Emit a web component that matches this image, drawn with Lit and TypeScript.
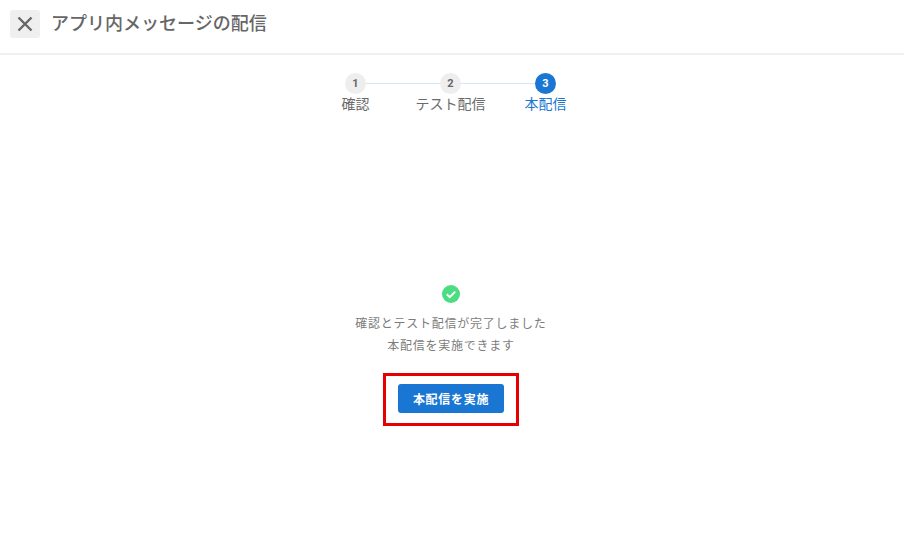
import { LitElement, html, css } from "lit";
import { customElement } from "lit/decorators.js";

@customElement("app-root")
export class AppRoot extends LitElement {
  static styles = css`
    :host {
      display: block;
      width: 904px;
      height: 535px;
      background: #fff;
      font-family: Roboto, "Noto Sans CJK JP", sans-serif;
      color: #666;
      overflow: hidden;
    }
    .header {
      height: 55px;
      box-sizing: border-box;
      border-bottom: 2px solid #f0f0f0;
      display: flex;
      align-items: flex-start;
      gap: 11px;
      padding: 10px 0 0 10px;
    }
    .close {
      width: 30px;
      height: 28px;
      border-radius: 3px;
      background: #efefef;
      display: flex;
      align-items: center;
      justify-content: center;
    }
    .title {
      font-size: 18px;
      font-weight: 500;
      color: #666;
      line-height: 28px;
    }
    .main {
      padding-right: 2px;
    }
    .steps {
      display: flex;
      justify-content: center;
      padding-top: 18px;
      padding-right: 1px;
    }
    .step {
      width: 95px;
      display: flex;
      flex-direction: column;
      align-items: center;
      position: relative;
      font-size: 14px;
      line-height: 20px;
      color: #6a6a6a;
    }
    .step.active { color: #1976d2; }
    .step + .step::before {
      content: "";
      position: absolute;
      top: 10px;
      right: 50%;
      width: 100%;
      height: 1px;
      background: #d5e6f5;
    }
    .num {
      position: relative;
      z-index: 1;
      width: 21px;
      height: 21px;
      border-radius: 50%;
      background: #eee;
      color: #666;
      font-size: 11px;
      font-weight: 700;
      display: flex;
      align-items: center;
      justify-content: center;
    }
    .active .num { background: #1976d2; color: #fff; }
    .done {
      margin-top: 171px;
      display: flex;
      flex-direction: column;
      align-items: center;
    }
    .check { display: block; }
    .msg {
      margin-top: 10px;
      font-size: 12px;
      line-height: 22px;
      letter-spacing: 0.75px;
      text-align: center;
      color: #7c7c7c;
    }
    .frame {
      margin-top: 16px;
      box-sizing: border-box;
      width: 136px;
      height: 53px;
      border: 3px solid #e60000;
      padding-top: 8px;
      display: flex;
      align-items: flex-start;
      justify-content: center;
    }
    .btn {
      width: 106px;
      height: 29px;
      border: 0;
      border-radius: 3px;
      background: #1976d2;
      color: #fff;
      font-family: inherit;
      font-size: 12px;
      font-weight: 700;
      letter-spacing: 0.7px;
      padding: 0;
    }
  `;

  render() {
    return html`
      <div class="header">
        <div class="close">
          <svg width="16" height="16" viewBox="0 0 16 16" fill="none" stroke="#666" stroke-width="2.4">
            <path d="M1.5 1.5 14.5 14.5M14.5 1.5 1.5 14.5"></path>
          </svg>
        </div>
        <div class="title">アプリ内メッセージの配信</div>
      </div>
      <div class="main">
        <div class="steps">
          <div class="step"><span class="num">1</span><span>確認</span></div>
          <div class="step"><span class="num">2</span><span>テスト配信</span></div>
          <div class="step active"><span class="num">3</span><span>本配信</span></div>
        </div>
        <div class="done">
          <svg class="check" width="18" height="18" viewBox="0 0 18 18">
            <circle cx="9" cy="9" r="9" fill="#4ade80"></circle>
            <path d="M4.8 9.2 7.8 12.1 13.2 6.6" fill="none" stroke="#fff" stroke-width="2"></path>
          </svg>
          <div class="msg">確認とテスト配信が完了しました<br />本配信を実施できます</div>
          <div class="frame"><button class="btn">本配信を実施</button></div>
        </div>
      </div>
    `;
  }
}
